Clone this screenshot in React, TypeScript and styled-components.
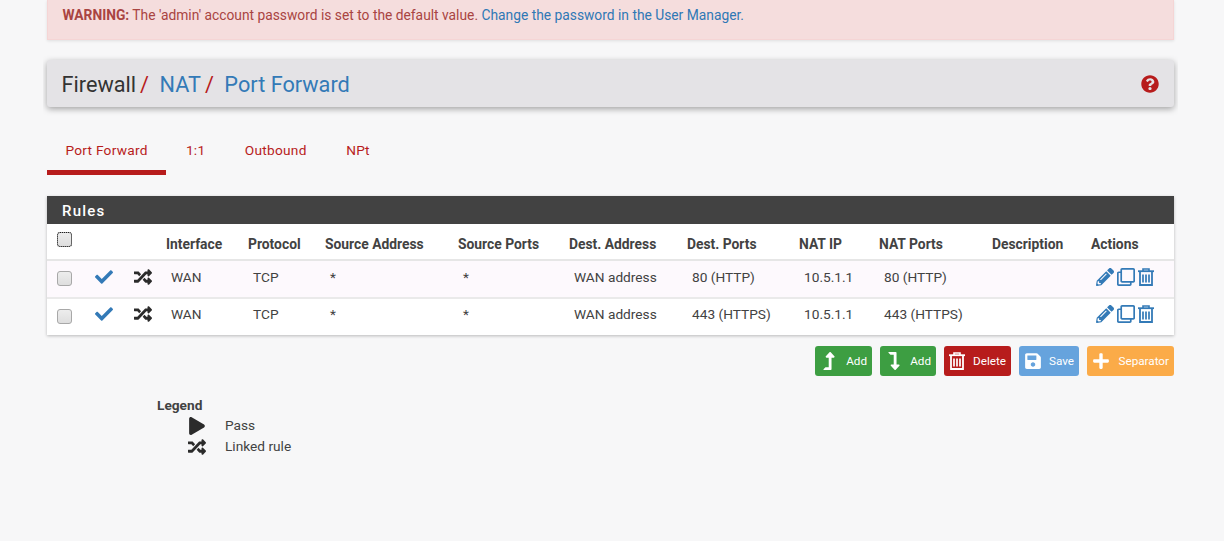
import { createGlobalStyle, styled } from 'styled-components';
import {
  FaCheck,
  FaLevelDownAlt,
  FaLevelUpAlt,
  FaPencilAlt,
  FaPlay,
  FaPlus,
  FaQuestionCircle,
  FaRandom,
  FaRegClone,
  FaSave,
} from 'react-icons/fa';

const GlobalStyle = createGlobalStyle`
  html, body {
    margin: 0;
    padding: 0;
    background: #f7f7f8;
    font-family: Roboto, 'Liberation Sans', sans-serif;
    font-size: 13.7px;
    color: #424242;
  }
`;

const Page = styled.div`
  width: 1127.5px;
  height: 541px;
  padding: 0 4px;
  margin-left: 42.5px;
  overflow: hidden;
`;

const Alert = styled.div`
  height: 40px;
  box-sizing: border-box;
  padding: 7px 15px 0;
  background: #f5dddd;
  border: 1px solid #f5d5d5;
  border-top: 0;
  box-shadow: 0 1px 3px rgba(0, 0, 0, 0.1);
  color: #a94442;
  font-size: 13.8px;
  line-height: 17px;
  a {
    color: #2f78b5;
    text-decoration: none;
  }
`;

const Breadcrumb = styled.div`
  display: flex;
  align-items: center;
  justify-content: space-between;
  box-sizing: border-box;
  height: 47px;
  margin-top: 20px;
  padding: 1px 15px 0;
  background: #e4e3e6;
  border-radius: 3px;
  box-shadow: 0 2px 6px rgba(0, 0, 0, 0.35);
  font-size: 21.7px;
  color: #333;
`;

const Crumbs = styled.div`
  display: flex;
  align-items: center;
`;

const Slash = styled.span`
  color: #b71c1c;
  margin: 0 10.5px 0 4px;
`;

const CrumbLink = styled.span`
  color: #337ab7;
`;

const HelpIcon = styled(FaQuestionCircle)`
  display: block;
  color: #b71c1c;
  font-size: 18px;
`;

const Tabs = styled.div`
  display: flex;
  margin-top: 22px;
  height: 46px;
`;

const Tab = styled.div<{ $active?: boolean }>`
  box-sizing: border-box;
  height: 46px;
  padding: 13px 19.75px 0;
  font-size: 13.7px;
  line-height: 17px;
  letter-spacing: 0.25px;
  color: #b71c1c;
  border-bottom: 5px solid ${(p) => (p.$active ? '#b71c1c' : 'transparent')};
  &:first-child {
    padding-left: 19px;
    padding-right: 18.5px;
  }
`;

const Panel = styled.div`
  width: 1127px;
  margin: 21px 0 0 0.5px;
  background: #fff;
  box-shadow: 0 1px 3px rgba(0, 0, 0, 0.25);
`;

const PanelHeading = styled.div`
  height: 28px;
  box-sizing: border-box;
  padding: 6px 15px 0;
  background: #424242;
  color: #fff;
  font-size: 15px;
  font-weight: 500;
  line-height: 18px;
  letter-spacing: 1.2px;
`;

const Table = styled.table`
  width: 100%;
  table-layout: fixed;
  border-collapse: collapse;
  font-size: 13.7px;
`;

const Th = styled.th`
  box-sizing: border-box;
  height: 36px;
  padding: 4px 0 0;
  text-align: left;
  font-size: 13.85px;
  font-weight: 700;
  color: #424242;
  border-bottom: 2px solid #e6e6e6;
  white-space: nowrap;
`;

const Td = styled.td`
  box-sizing: border-box;
  padding: 0 0 4px 5px;
  color: #424242;
  white-space: nowrap;
`;

const IconCell = styled.td<{ $pad: number }>`
  box-sizing: border-box;
  padding: 0 0 4px ${(p) => p.$pad}px;
  svg {
    display: block;
  }
`;

const BoxCell = styled.td`
  box-sizing: border-box;
  padding: 0 0 2px;
`;

const Row = styled.tr<{ $tint?: boolean }>`
  height: 38px;
  background: ${(p) => (p.$tint ? '#fdf9fd' : '#fff')};
  border-bottom: 2px solid #eaeaea;
  &:last-child {
    border-bottom: 0;
    height: 37px;
    ${Td}, ${IconCell} {
      padding-bottom: 6px;
    }
  }
`;

const Check = styled.span<{ $focus?: boolean }>`
  display: block;
  box-sizing: border-box;
  width: 15px;
  height: 15px;
  margin: ${(p) => (p.$focus ? '-8px 0 0 10px' : '0 0 0 10px')};
  border-radius: 3px;
  background: linear-gradient(#ededed, #dedede);
  border: 1px solid #a8a8a8;
  outline: ${(p) => (p.$focus ? '1px dotted #222' : 'none')};
  outline-offset: -1px;
`;

const ActionIcons = styled.div`
  display: flex;
  align-items: center;
  gap: 3px;
  margin-left: 5px;
  color: #337ab7;
  font-size: 18px;
`;

const ButtonBar = styled.div`
  display: flex;
  justify-content: flex-end;
  gap: 8px;
  margin-top: 11px;
`;

const Button = styled.div<{ $bg: string; $width: number }>`
  display: flex;
  align-items: center;
  justify-content: space-between;
  box-sizing: border-box;
  width: ${(p) => p.$width}px;
  height: 30px;
  padding: 0 5px;
  border-radius: 3px;
  background: ${(p) => p.$bg};
  color: #fff;
  font-size: 11.7px;
  svg {
    font-size: 18px;
    display: block;
  }
`;

const Legend = styled.div`
  margin: 20px 0 0 110.5px;
  font-size: 13.7px;
  line-height: 21px;
`;

const LegendTitle = styled.div`
  font-weight: 700;
  height: 19px;
  line-height: 19px;
`;

const LegendRow = styled.div`
  display: flex;
  align-items: center;
  height: 21px;
`;

const LegendIcon = styled.div`
  display: flex;
  justify-content: center;
  width: 80px;
  font-size: 18px;
  margin-right: -12px;
  svg {
    display: block;
  }
`;

const TrashIcon = () => (
  <svg width="16" height="18" viewBox="0 0 16 18" fill="none" stroke="currentColor">
    <path d="M0 3.2h16" strokeWidth="1.8" />
    <path d="M5 3V1h6v2" strokeWidth="1.6" />
    <path d="M2 3.5V17h12V3.5" strokeWidth="1.8" />
    <path d="M5 6.5v8M8 6.5v8M11 6.5v8" strokeWidth="1.7" />
  </svg>
);

const columns = [38, 40, 41, 82, 77, 133, 111, 118, 112, 80, 113, 99, 83];

const headers = [
  'Interface',
  'Protocol',
  'Source Address',
  'Source Ports',
  'Dest. Address',
  'Dest. Ports',
  'NAT IP',
  'NAT Ports',
  'Description',
  'Actions',
];

const rules = [
  { dest: '80 (HTTP)', tint: true },
  { dest: '443 (HTTPS)', tint: false },
];

const App = () => {
  return (
    <Page>
      <GlobalStyle />
      <Alert>
        <strong>WARNING:</strong> The 'admin' account password is set to the default value.{' '}
        <a href="#">Change the password in the User Manager.</a>
      </Alert>
      <Breadcrumb>
        <Crumbs>
          Firewall
          <Slash>/</Slash>
          <CrumbLink>NAT</CrumbLink>
          <Slash>/</Slash>
          <CrumbLink>Port Forward</CrumbLink>
        </Crumbs>
        <HelpIcon />
      </Breadcrumb>
      <Tabs>
        <Tab $active>Port Forward</Tab>
        <Tab>1:1</Tab>
        <Tab>Outbound</Tab>
        <Tab>NPt</Tab>
      </Tabs>
      <Panel>
        <PanelHeading>Rules</PanelHeading>
        <Table>
          <colgroup>
            {columns.map((width, idx) => (
              <col key={idx} style={{ width }} />
            ))}
          </colgroup>
          <thead>
            <tr>
              <Th>
                <Check $focus />
              </Th>
              <Th />
              <Th />
              {headers.map((header) => (
                <Th key={header}>{header}</Th>
              ))}
            </tr>
          </thead>
          <tbody>
            {rules.map(({ dest, tint }) => (
              <Row key={dest} $tint={tint}>
                <BoxCell>
                  <Check />
                </BoxCell>
                <IconCell $pad={10}>
                  <FaCheck color="#337ab7" size={18} />
                </IconCell>
                <IconCell $pad={9}>
                  <FaRandom color="#2b2b2b" size={18} />
                </IconCell>
                <Td>WAN</Td>
                <Td>TCP</Td>
                <Td>*</Td>
                <Td>*</Td>
                <Td>WAN address</Td>
                <Td>{dest}</Td>
                <Td>10.5.1.1</Td>
                <Td>{dest}</Td>
                <Td />
                <IconCell $pad={0}>
                  <ActionIcons>
                    <FaPencilAlt />
                    <FaRegClone />
                    <TrashIcon />
                  </ActionIcons>
                </IconCell>
              </Row>
            ))}
          </tbody>
        </Table>
      </Panel>
      <ButtonBar>
        <Button $bg="#3d9e42" $width={57}>
          <FaLevelUpAlt />
          Add
        </Button>
        <Button $bg="#3d9e42" $width={56}>
          <FaLevelDownAlt />
          Add
        </Button>
        <Button $bg="#b71c1c" $width={67}>
          <TrashIcon />
          Delete
        </Button>
        <Button $bg="#66a3dd" $width={60}>
          <FaSave />
          Save
        </Button>
        <Button $bg="#fbab48" $width={87}>
          <FaPlus />
          Separator
        </Button>
      </ButtonBar>
      <Legend>
        <LegendTitle>Legend</LegendTitle>
        <LegendRow>
          <LegendIcon>
            <FaPlay color="#2b2b2b" />
          </LegendIcon>
          Pass
        </LegendRow>
        <LegendRow>
          <LegendIcon>
            <FaRandom color="#2b2b2b" />
          </LegendIcon>
          Linked rule
        </LegendRow>
      </Legend>
    </Page>
  );
};

export default App;
